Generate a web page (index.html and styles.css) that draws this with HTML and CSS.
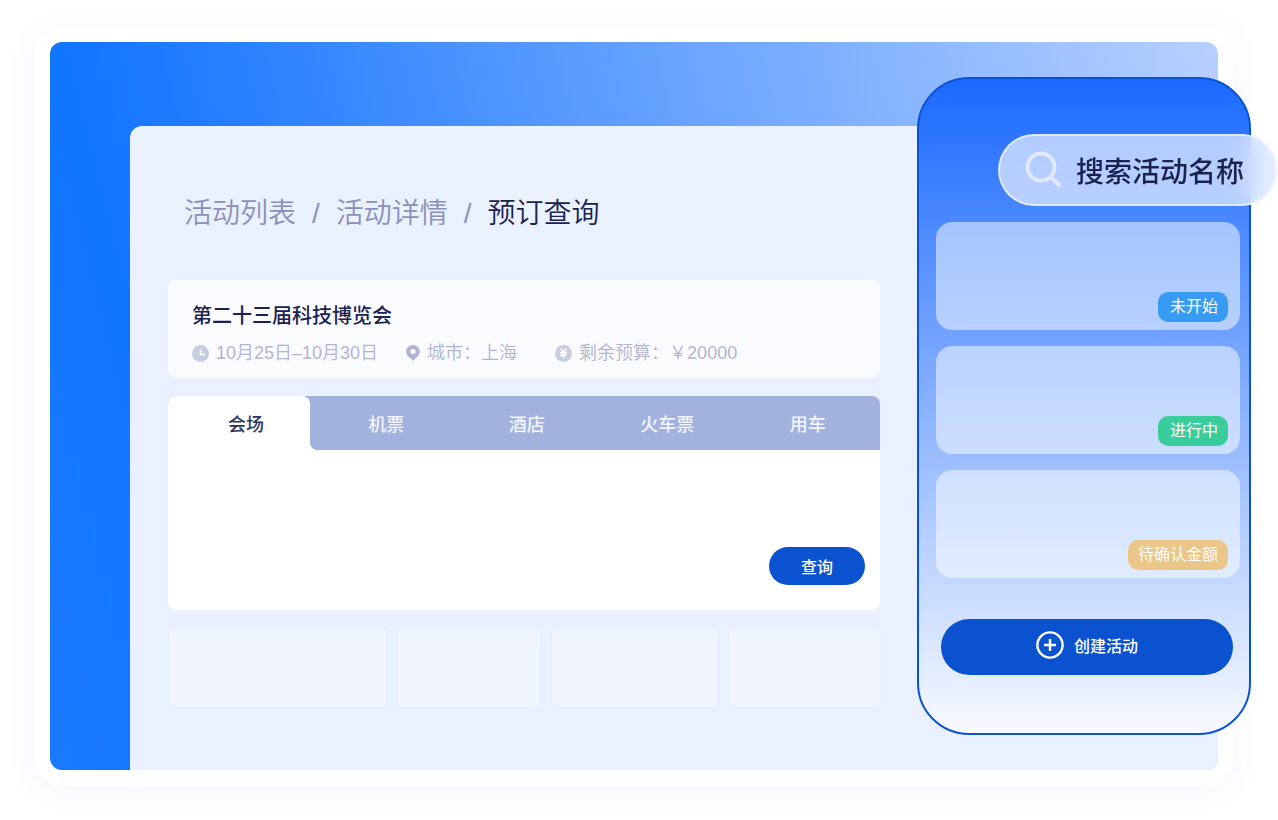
FILE: index.html
```html
<!DOCTYPE html>
<html lang="zh-CN">
<head>
    <meta charset="UTF-8">
    <meta name="viewport" content="width=device-width, initial-scale=1.0">
    <title>预订查询</title>
    <link rel="stylesheet" href="styles.css">
</head>
<body>
    <div class="frame">
        <div class="screen">
            <!-- Workspace -->
            <main class="workspace">
                <nav class="breadcrumb">
                    <a href="#">活动列表</a>
                    <span>/</span>
                    <a href="#">活动详情</a>
                    <span>/</span>
                    <a href="#" class="current">预订查询</a>
                </nav>

                <!-- Event info -->
                <section class="event">
                    <h1>第二十三届科技博览会</h1>
                    <div class="event-meta">
                        <div class="meta-item date">
                            <svg width="17" height="17" viewBox="0 0 16 16">
                                <circle cx="8" cy="8" r="8" fill="#c8cce0"/>
                                <path d="M8 4V8.800H12" fill="none" stroke="#fff" stroke-width="1.600"/>
                            </svg>
                            <span>10月25日–10月30日</span>
                        </div>
                        <div class="meta-item city">
                            <svg width="14" height="16" viewBox="0 0 14 16">
                                <path d="M7 0C3.100 0 .2 3 .2 6.700c0 3.200 2.200 5 4.600 6.900L7 16l2.200-2.400c2.400-1.900 4.600-3.700 4.600-6.900C13.800 3 10.900 0 7 0z" fill="#b0b4d0"/>
                                <circle cx="7" cy="6.500" r="2.600" fill="#fff"/>
                            </svg>
                            <span>城市：上海</span>
                        </div>
                        <div class="meta-item">
                            <svg width="17" height="17" viewBox="0 0 16 16">
                                <circle cx="8" cy="8" r="8" fill="#c8cce0"/>
                                <path d="M5.300 3.500L8 6.800l2.700-3.300M8 7v5.500M4.800 7.500h6.400M4.800 9.800h6.400" fill="none" stroke="#fff" stroke-width="1.600"/>
                            </svg>
                            <span>剩余预算：￥20000</span>
                        </div>
                    </div>
                </section>

                <!-- Booking search -->
                <section class="booking">
                    <div class="tabs" role="tablist">
                        <button type="button" class="tab active" role="tab" aria-selected="true">会场</button>
                        <button type="button" class="tab" role="tab">机票</button>
                        <button type="button" class="tab" role="tab">酒店</button>
                        <button type="button" class="tab" role="tab">火车票</button>
                        <button type="button" class="tab" role="tab">用车</button>
                    </div>
                    <div class="booking-body">
                        <button type="button" class="query-btn">查询</button>
                    </div>
                </section>

                <div class="tiles">
                    <div class="tile"></div>
                    <div class="tile"></div>
                    <div class="tile"></div>
                    <div class="tile"></div>
                </div>
            </main>
        </div>

        <!-- Floating activity panel -->
        <aside class="panel">
            <label class="search">
                <svg width="38" height="38" viewBox="0 0 38 38" fill="none" stroke="#e0e9ff" stroke-width="4">
                    <circle cx="17" cy="16" r="13.500"/>
                    <path d="M26.500 25.500L36 35"/>
                </svg>
                <input type="text" placeholder="搜索活动名称" aria-label="搜索活动名称">
            </label>
            <div class="activities">
                <div class="activity"><span class="badge pending">未开始</span></div>
                <div class="activity"><span class="badge running">进行中</span></div>
                <div class="activity"><span class="badge confirm">待确认金额</span></div>
            </div>
            <button type="button" class="create-btn">
                <svg width="28" height="28" viewBox="0 0 28 28" fill="none" stroke="#fff" stroke-width="2.400">
                    <circle cx="14" cy="14" r="12.600"/>
                    <path d="M14 8v12M8 14h12"/>
                </svg>
                <span>创建活动</span>
            </button>
        </aside>
    </div>
</body>
</html>
```
FILE: styles.css
```css
/* Reset and Base Styles */
* {
    margin: 0;
    padding: 0;
    box-sizing: border-box;
}

body {
    font-family: "Liberation Sans", "Noto Sans CJK SC", sans-serif;
    background: #fff;
    color: #1b2250;
    padding: 26px 44px 34px 34px;
}

button,
input {
    font: inherit;
    border: none;
    outline: none;
}

button {
    cursor: pointer;
}

a {
    color: inherit;
    text-decoration: none;
}

svg {
    flex: none;
}

/* Outer frame */
.frame {
    position: relative;
    padding: 16px;
    border-radius: 28px;
    background: #fff;
    box-shadow: 0 4px 32px rgba(50, 80, 220, 0.06);
}

.screen {
    padding: 84px 0 0 80px;
    border-radius: 12px;
    background: linear-gradient(76deg, #1a7aff 0%, #1075ff 14%, #2980ff 27%, #b8d0ff 100%);
    overflow: hidden;
}

/* Workspace */
.workspace {
    padding: 68px 338px 62px 38px;
    border-top-left-radius: 12px;
    background: linear-gradient(#ecf2ff, #e9f1ff 20%, #e9f0ff);
}

.breadcrumb {
    display: flex;
    gap: 16px;
    margin-bottom: 46px;
    padding-left: 16px;
    font-size: 28px;
    font-weight: 350;
    line-height: 40px;
    color: #8a90b8;
}

.breadcrumb .current {
    color: #1b2250;
}

/* Event info */
.event {
    margin-bottom: 18px;
    padding: 21px 24px 12px;
    border-radius: 8px;
    background: #fafbff;
}

.event h1 {
    margin-bottom: 9px;
    font-size: 20px;
    font-weight: 500;
    line-height: 30px;
}

.event-meta {
    display: flex;
    font-size: 18px;
    font-weight: 350;
    line-height: 26px;
    color: #b3b5cf;
}

.meta-item {
    display: flex;
    align-items: center;
    gap: 7px;
}

.date {
    margin-right: 28px;
}

.city {
    margin-right: 38px;
}

/* Booking search */
.booking {
    margin-bottom: 18px;
    border-radius: 8px;
    background: #fff;
    overflow: hidden;
}

.tabs {
    display: flex;
    padding-right: 2px;
    background: #a2b2de;
}

.tab {
    flex: 1;
    height: 54px;
    background: none;
    color: #f2f5ff;
    font-size: 18px;
    font-weight: 500;
}

.tab.active {
    position: relative;
    flex: 0 0 20%;
    margin-right: 6px;
    padding-left: 14px;
    border-radius: 0 8px 0 0;
    background: #fff;
    color: #2b335f;
}

/* Rounded inner corner of the tab bar */
.tab.active::after {
    content: "";
    position: absolute;
    right: -8px;
    bottom: 0;
    width: 8px;
    height: 8px;
    background: radial-gradient(circle at 100% 0, transparent 8px, #fff 8px);
}

.booking-body {
    display: flex;
    justify-content: flex-end;
    padding: 97px 15px 25px;
}

.query-btn {
    height: 38px;
    padding: 0 32px;
    border-radius: 19px;
    background: #0b52d1;
    color: #fff;
    font-size: 16px;
    font-weight: 500;
}

.tiles {
    display: grid;
    grid-template-columns: 219fr 143fr 167fr 154fr;
    gap: 10px;
    margin-right: -2px;
}

.tile {
    height: 80px;
    border: 1px solid #e5eefe;
    border-radius: 4px;
    background: #f0f5ff;
}

/* Floating activity panel */
.panel {
    position: absolute;
    top: 51px;
    right: -17px;
    width: 334px;
    padding: 55px 9px 58px 17px;
    border: 2px solid #0b52d1;
    border-radius: 52px;
    background: linear-gradient(#1a69ff, #f8faff);
}

.search {
    position: relative;
    display: flex;
    align-items: center;
    gap: 14px;
    height: 72px;
    margin: 0 -38px 16px 62px;
    padding: 0 24px;
    border: 2px solid rgba(255, 255, 255, 0.6);
    border-radius: 36px;
    background: rgba(220, 231, 255, 0.76);
    backdrop-filter: blur(12px);
}

.search input {
    flex: 1;
    min-width: 0;
    height: 48px;
    padding-top: 6px;
    background: none;
    color: #1b2250;
    font-size: 28px;
    font-weight: 500;
}

.search input::placeholder {
    color: #1b2250;
    opacity: 1;
}

.activities {
    display: flex;
    flex-direction: column;
    gap: 16px;
    margin-bottom: 41px;
}

.activity {
    display: flex;
    justify-content: flex-end;
    align-items: flex-end;
    height: 108px;
    padding: 8px 12px;
    border-radius: 16px;
    background: rgba(255, 255, 255, 0.5);
}

.badge {
    min-width: 70px;
    padding: 0 10px;
    border-radius: 10px;
    color: #fff;
    font-size: 16px;
    line-height: 30px;
    text-align: right;
}

.pending {
    background: #389bf3;
}

.running {
    background: #3acd9c;
}

.confirm {
    background: #eac688;
}

.create-btn {
    display: flex;
    justify-content: center;
    align-items: center;
    gap: 10px;
    width: 292px;
    height: 56px;
    margin-left: 5px;
    padding-bottom: 4px;
    border-radius: 28px;
    background: #0b52d1;
    color: #fff;
    font-size: 16px;
    font-weight: 500;
}
```
